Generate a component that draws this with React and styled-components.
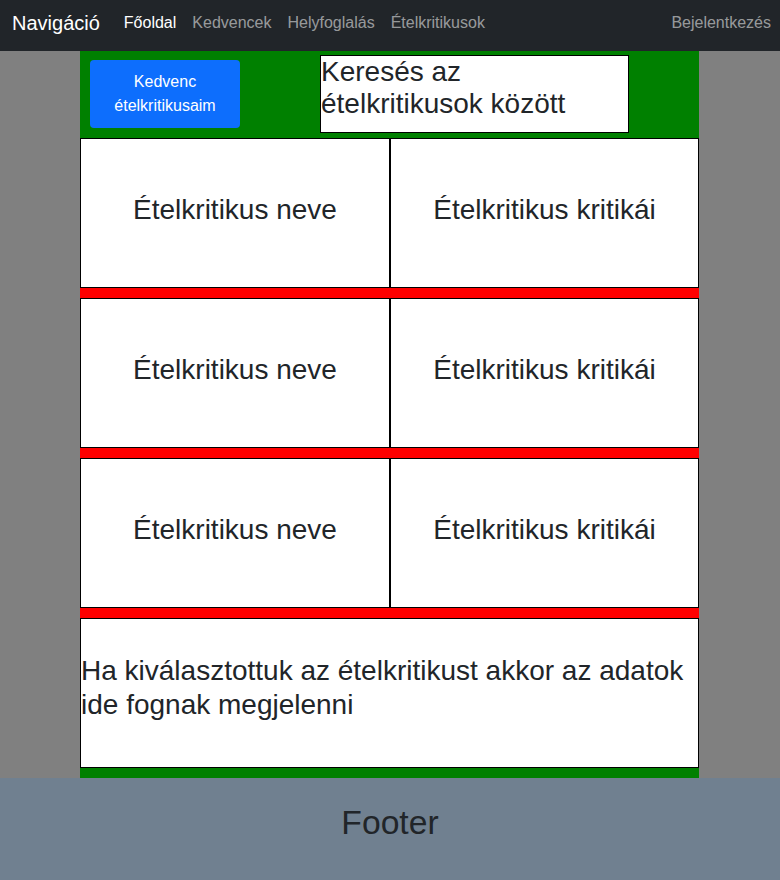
import styled, { createGlobalStyle } from "styled-components";

const GlobalStyle = createGlobalStyle`
  * {
    box-sizing: border-box;
  }
  body {
    margin: 0;
    font-family: "Liberation Sans", Arial, sans-serif;
    color: #212529;
    background: #808080;
  }
`;

const critics = [1, 2, 3];

const App = () => {
  return (
    <>
      <GlobalStyle />
      <Page>
        <Navbar>
          <Brand>Navigáció</Brand>
          <NavLinks>
            <NavLink active>Főoldal</NavLink>
            <NavLink>Kedvencek</NavLink>
            <NavLink>Helyfoglalás</NavLink>
            <NavLink>Ételkritikusok</NavLink>
          </NavLinks>
          <LoginLink>Bejelentkezés</LoginLink>
        </Navbar>
        <Main>
          <Content>
            <TopBar>
              <FavButton>
                Kedvenc
                <br />
                ételkritikusaim
              </FavButton>
              <SearchBox>Keresés az ételkritikusok között</SearchBox>
            </TopBar>
            {critics.map((c) => (
              <CriticRow key={c}>
                <Cell>Ételkritikus neve</Cell>
                <Cell>Ételkritikus kritikái</Cell>
              </CriticRow>
            ))}
            <Details>
              Ha kiválasztottuk az ételkritikust akkor az adatok ide fognak
              megjelenni
            </Details>
          </Content>
        </Main>
        <Footer>Footer</Footer>
      </Page>
    </>
  );
};

const Page = styled.div`
  display: flex;
  flex-direction: column;
  min-height: 880px;
`;

const Navbar = styled.nav`
  height: 51px;
  display: flex;
  align-items: center;
  padding: 0 9px 6px 12px;
  background: #212529;
`;

const Brand = styled.div`
  color: #fff;
  font-size: 20px;
  line-height: 30px;
  margin-right: 16px;
`;

const NavLinks = styled.div`
  display: flex;
  flex: 1;
`;

const NavLink = styled.div`
  padding: 0 8px;
  font-size: 16px;
  line-height: 24px;
  color: ${(p) => (p.active ? "#fff" : "rgba(255, 255, 255, 0.55)")};
`;

const LoginLink = styled.div`
  font-size: 16px;
  line-height: 24px;
  color: rgba(255, 255, 255, 0.55);
`;

const Main = styled.main`
  display: flex;
  justify-content: center;
  padding-right: 1px;
  background: #808080;
`;

const Content = styled.div`
  width: 619px;
  background: #008000;
  padding-bottom: 10px;
`;

const TopBar = styled.div`
  height: 87px;
  display: flex;
  align-items: flex-start;
  padding: 4px 0 0 10px;
`;

const FavButton = styled.button`
  width: 150px;
  height: 68px;
  margin-top: 5px;
  margin-right: 80px;
  border: none;
  border-radius: 4px;
  background: #0d6efd;
  color: #fff;
  font-family: "Liberation Sans", Arial, sans-serif;
  font-size: 16px;
  line-height: 24px;
  text-align: center;
`;

const SearchBox = styled.div`
  width: 309px;
  height: 78px;
  padding: 0;
  border: 1px solid #000;
  background: #fff;
  font-size: 28px;
  line-height: 32px;
`;

const CriticRow = styled.div`
  display: grid;
  grid-template-columns: 310px 1fr;
  padding-bottom: 10px;
  background: #ff0000;
`;

const Cell = styled.div`
  height: 150px;
  display: flex;
  align-items: center;
  justify-content: center;
  padding-bottom: 7px;
  border: 1px solid #000;
  background: #fff;
  font-size: 28px;
  line-height: 34px;
`;

const Details = styled.div`
  height: 150px;
  display: flex;
  align-items: center;
  padding: 0 0 10px;
  border: 1px solid #000;
  background: #fff;
  font-size: 28px;
  line-height: 34px;
`;

const Footer = styled.footer`
  flex: 1;
  display: flex;
  justify-content: center;
  padding-top: 24px;
  background: #708090;
  font-size: 33.7px;
  line-height: 40px;
`;

export default App;
